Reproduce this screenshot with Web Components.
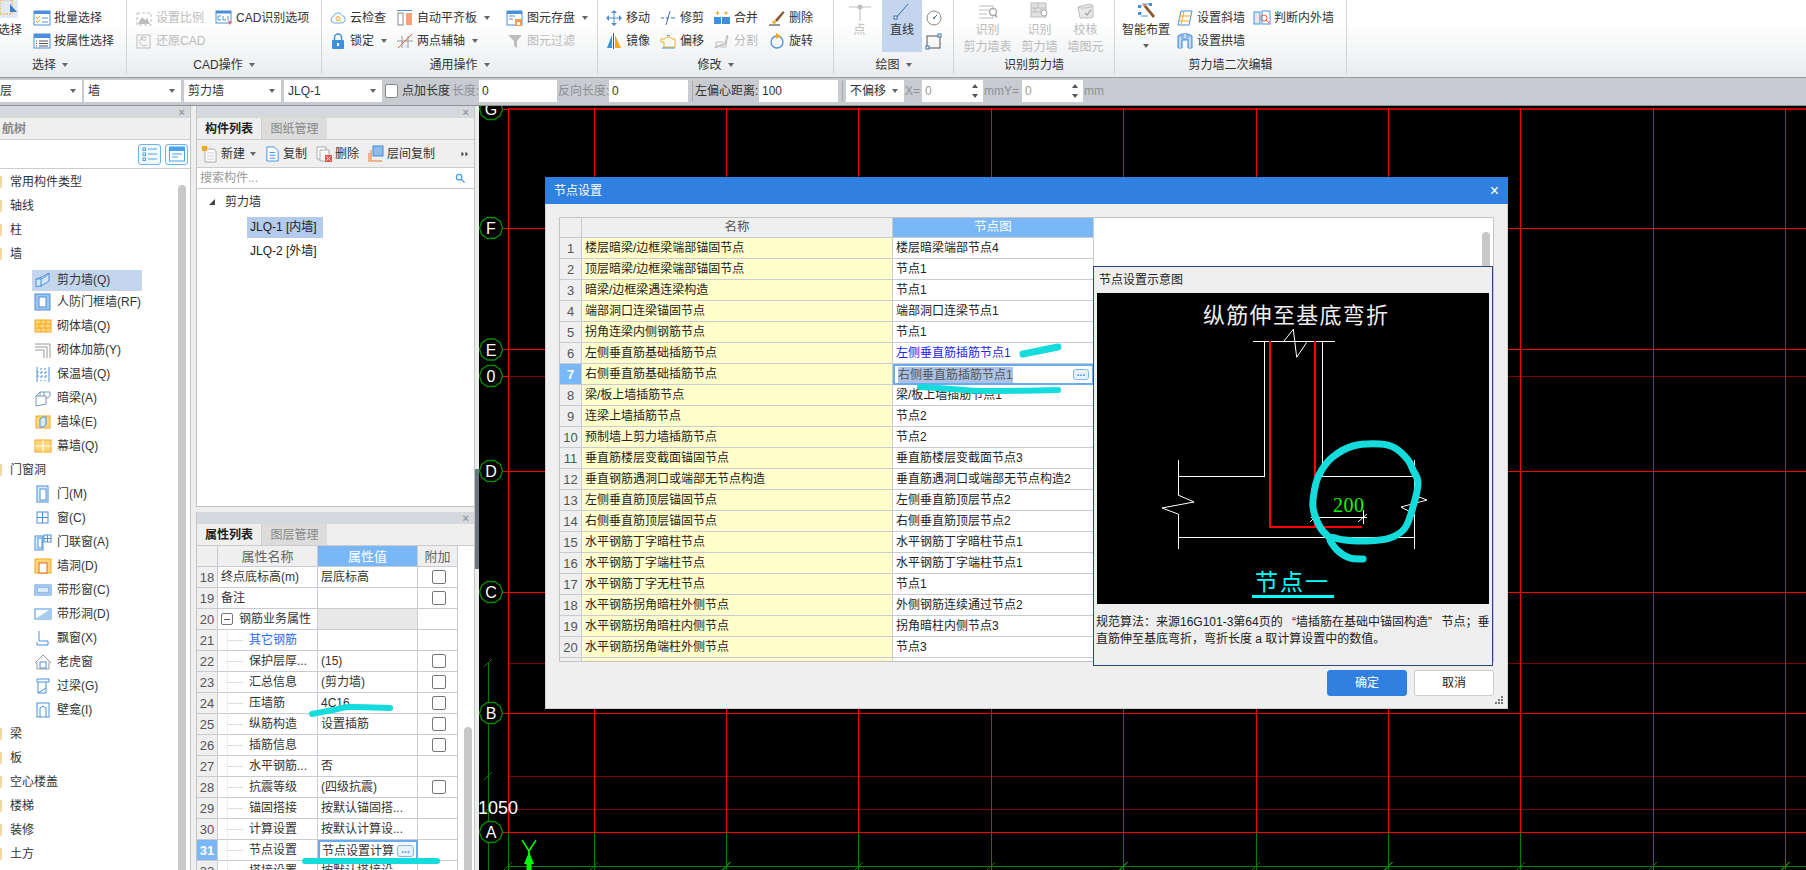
<!DOCTYPE html>
<html lang="zh">
<head>
<meta charset="utf-8">
<title>节点设置</title>
<style>
    html, body { margin: 0; height: 100%; overflow: hidden; }
    body { font: 12px/1 "Liberation Sans", "Noto Sans CJK SC", sans-serif; color: #333; }
</style>
</head>
<body>

<cad-app>
    <ribbon-bar slot="top">
        <ribbon-group label="选择" cols="34px 92px" style="width:127px;--label-pad:0 26px 0 0">
            <rb-big icon="select" style="margin-left:-3px;width:26px">选择</rb-big>
            <rb-item icon="batch">批量选择</rb-item>
            <rb-item icon="attrsel">按属性选择</rb-item>
        </ribbon-group>
        <ribbon-group label="CAD操作" cols="80px 100px" pad="9" style="width:195px">
            <rb-item icon="scale" dim>设置比例</rb-item>
            <rb-item icon="restore" dim>还原CAD</rb-item>
            <rb-item icon="cadopt">CAD识别选项</rb-item>
        </ribbon-group>
        <ribbon-group label="通用操作" cols="67px 110px 90px" pad="8" style="width:276px">
            <rb-item icon="cloud">云检查</rb-item>
            <rb-item icon="lock" arrow>锁定</rb-item>
            <rb-item icon="flush" arrow>自动平齐板</rb-item>
            <rb-item icon="twopt" arrow>两点辅轴</rb-item>
            <rb-item icon="store" arrow>图元存盘</rb-item>
            <rb-item icon="filter" dim>图元过滤</rb-item>
        </ribbon-group>
        <ribbon-group label="修改" cols="54px 54px 55px 50px" pad="8" style="width:236px">
            <rb-item icon="move">移动</rb-item>
            <rb-item icon="mirror">镜像</rb-item>
            <rb-item icon="trim">修剪</rb-item>
            <rb-item icon="offset">偏移</rb-item>
            <rb-item icon="merge">合并</rb-item>
            <rb-item icon="split" dim>分割</rb-item>
            <rb-item icon="brush">删除</rb-item>
            <rb-item icon="rotate">旋转</rb-item>
        </ribbon-group>
        <ribbon-group label="绘图" cols="48px 44px 20px" pad="0" style="width:120px;padding-left:0">
            <rb-big icon="point" dim style="margin-left:12px;width:27px">点</rb-big>
            <rb-big icon="line" on style="width:40px">直线</rb-big>
            <rb-item icon="circle"></rb-item>
            <rb-item icon="rect"></rb-item>
        </ribbon-group>
        <ribbon-group label="识别剪力墙" cols="57px 46px 46px" pad="10" style="width:161px">
            <rb-big icon="idtable" dim style="width:47px">识别<br>剪力墙表</rb-big>
            <rb-big icon="idwall" dim style="width:37px">识别<br>剪力墙</rb-big>
            <rb-big icon="check3d" dim style="width:37px">校核<br>墙图元</rb-big>
        </ribbon-group>
        <ribbon-group label="剪力墙二次编辑" cols="55px 77px 90px" pad="7" style="width:232px">
            <rb-big icon="smart" drop style="width:48px">智能布置</rb-big>
            <rb-item icon="slope">设置斜墙</rb-item>
            <rb-item icon="arch">设置拱墙</rb-item>
            <rb-item icon="inout" style="grid-row:1">判断内外墙</rb-item>
        </ribbon-group>
    </ribbon-bar>

    <param-bar slot="top">
        <pb-combo style="width:82px;padding-left:0">层</pb-combo>
        <pb-combo style="width:97px;margin-left:2px">墙</pb-combo>
        <pb-combo style="width:97px;margin-left:3px">剪力墙</pb-combo>
        <pb-combo style="width:98px;margin-left:3px">JLQ-1</pb-combo>
        <pb-check style="margin-left:3px"></pb-check>
        <pb-label style="margin-left:4px;width:48px">点加长度</pb-label>
        <pb-label mute style="margin-left:2px;width:26px">长度:</pb-label>
        <pb-input style="margin-left:1px;width:78px">0</pb-input>
        <pb-label mute style="margin-left:1px;width:50px">反向长度:</pb-label>
        <pb-input style="margin-left:1px;width:79px">0</pb-input>
        <pb-sep style="margin-left:4px"></pb-sep>
        <pb-label style="margin-left:2px;width:64px">左偏心距离:</pb-label>
        <pb-input style="width:79px">100</pb-input>
        <pb-sep style="margin-left:4px"></pb-sep>
        <pb-combo style="width:58px;margin-left:3px">不偏移</pb-combo>
        <pb-label mute style="margin-left:1px;width:16px">X=</pb-label>
        <pb-input spin mute style="margin-left:1px;width:61px">0</pb-input>
        <pb-label mute style="margin-left:1px;width:37px">mmY=</pb-label>
        <pb-input spin mute style="margin-left:1px;width:61px">0</pb-input>
        <pb-label mute style="margin-left:1px">mm</pb-label>
    </param-bar>

    <nav-tree slot="left"></nav-tree>
    <side-panels slot="side">
        <component-list></component-list>
        <prop-table></prop-table>
    </side-panels>
    <cad-canvas slot="main"></cad-canvas>

    <node-dialog slot="over"></node-dialog>
    <ink-marks slot="over"></ink-marks>
</cad-app>

<script>
const BLUE = '#4a90d9', ORG = '#f5a623', GREY = '#bdbdbd'

const ICONS = {
    select: `<rect x="-6" y="-4" width="22" height="20" fill="#dfe9f7"/><rect x="-2" y="-2" width="12" height="14" fill="none" stroke="${ORG}" stroke-dasharray="2 1"/><path d="M8 2l7 8h-7z" fill="#3c7fc4"/>`,
    batch: `<rect x="0" y="1" width="16" height="14" fill="#fff" stroke="${BLUE}"/><rect x="0" y="1" width="16" height="3" fill="${BLUE}"/><path d="M2 7l1.5 1.5L6 6M2 11l1.5 1.5L6 10" stroke="${ORG}" fill="none"/><path d="M8 8h6M8 12h6" stroke="${BLUE}"/>`,
    attrsel: `<rect x="0" y="1" width="16" height="14" fill="#fff" stroke="${BLUE}"/><rect x="0" y="1" width="16" height="4" fill="${BLUE}"/><path d="M5 8h9M5 10.5h9M5 13h9M2 8h1M2 10.5h1M2 13h1" stroke="#555"/>`,
    scale: `<path d="M1 3h14v12H1z" fill="none" stroke="${GREY}" stroke-dasharray="3 2"/><path d="M2 14l4-7 3 3 2-2 3 6z" fill="${GREY}"/>`,
    restore: `<rect x="1" y="2" width="13" height="13" fill="none" stroke="${GREY}"/><path d="M11 5A4.5 4.5 0 1 0 11 12M6 3v4h4" fill="none" stroke="${GREY}"/>`,
    cadopt: `<rect x="0" y="1" width="15" height="12" fill="#fff" stroke="${BLUE}"/><rect x="0" y="1" width="15" height="2.5" fill="${BLUE}"/><path d="M2 6h3M2 10h3M2 6v4M7 6v4h3M12 6v4" stroke="${BLUE}" fill="none"/><path d="M12 10l4 3-2 .5-.5 2z" fill="#e8632b"/>`,
    cloud: `<path d="M4 13a3.4 3.4 0 0 1-.5-6.6A4.5 4.5 0 0 1 12 5.5a3.8 3.8 0 0 1 0 7.5z" fill="#fff" stroke="#62aee8"/><circle cx="8" cy="8.5" r="2" fill="none" stroke="${ORG}"/><path d="M9.5 10l1.5 1.5" stroke="${ORG}"/>`,
    lock: `<rect x="2" y="7" width="12" height="9" rx="1" fill="#3f8fe0"/><path d="M4.5 7V4.5a3.5 3.5 0 0 1 7 0V7" fill="none" stroke="#3f8fe0" stroke-width="1.5"/><rect x="7" y="10" width="2" height="3" fill="#fff"/>`,
    flush: `<path d="M0 .5h15" stroke="${BLUE}"/><rect x="1" y="3" width="5" height="12" fill="#fff" stroke="#888"/><rect x="9" y="3" width="6" height="12" fill="#f9a077"/>`,
    twopt: `<path d="M0 8h16M5 3v12M11 3v12" stroke="#999"/><path d="M1 15L15 1" stroke="#e8632b"/>`,
    store: `<rect x="0" y="1" width="15" height="14" fill="#fff" stroke="${BLUE}"/><rect x="0" y="1" width="15" height="3" fill="${BLUE}"/><path d="M2 6h6M2 9h4" stroke="${BLUE}"/><rect x="8" y="9" width="7" height="7" fill="#f79a5a"/><rect x="10" y="12" width="3" height="3" fill="#fff"/>`,
    filter: `<path d="M1 2h14l-5 6v7l-3-2V8z" fill="${GREY}"/>`,
    move: `<path d="M8 1v14M1 8h14" stroke="${BLUE}"/><path d="M8 0l3 3H5zM8 16l3-3H5zM0 8l3-3v6zM16 8l-3-3v6z" fill="${BLUE}"/>`,
    trim: `<path d="M1 8h3M6 8h3M11 8h4" stroke="#3a6ea5"/><path d="M6 15L10 1" stroke="#3a6ea5"/>`,
    merge: `<rect x="0" y="7" width="7" height="7" fill="#3f8fe0"/><rect x="8" y="7" width="8" height="7" fill="#3f8fe0"/><path d="M3.5 1v4M1.5 3h4M12 1v4M10 3h4" stroke="${ORG}"/>`,
    brush: `<path d="M6 10l8-9 1.5 1.5L8 12z" fill="#8a5a30"/><path d="M4 11c2-1 3 0 3 2-1 1-3 1-4 0z" fill="${ORG}"/><path d="M0 15h11" stroke="#333"/>`,
    mirror: `<path d="M6 2v13H1z" fill="#3f8fe0"/><path d="M9 2v13h6z" fill="${ORG}"/><path d="M7.5 0v16" stroke="#555"/>`,
    offset: `<path d="M4 14V9H1V6h4a4 4 0 0 1 7 0h3v8z" fill="#fff" stroke="${ORG}"/><path d="M2 15h13" stroke="${BLUE}"/><path d="M7 3a2 2 0 0 1 3 0" stroke="${BLUE}" fill="none"/>`,
    split: `<path d="M1 14l10-4 2-8 1 1-2 8-11 4zM2 9h7M2 9v5M12 8v6H6" fill="none" stroke="${GREY}"/>`,
    rotate: `<circle cx="8" cy="9" r="6" fill="none" stroke="${BLUE}" stroke-width="1.3"/><path d="M7 0l5 3-5 3z" fill="${ORG}"/>`,
    point: `<path d="M-3 5h22M8 5v14" stroke="${GREY}"/><circle cx="8" cy="5" r="2.5" fill="${GREY}"/>`,
    line: `<path d="M2 16L14 2" stroke="#3a6ea5"/><rect x="0" y="14" width="3" height="3" fill="#fff" stroke="#3a6ea5"/>`,
    circle: `<rect x="7" y="-14" width="3" height="3" fill="#fff" stroke="#3a6ea5"/><circle cx="8" cy="8" r="7" fill="none" stroke="#888"/><path d="M8 8l3-3" stroke="#555"/><circle cx="8" cy="8" r="1" fill="#3a6ea5"/>`,
    rect: `<rect x="1" y="3" width="13" height="12" fill="none" stroke="#555"/><rect x="0" y="13" width="3" height="3" fill="#fff" stroke="#3a6ea5"/><rect x="12" y="1" width="3" height="3" fill="#fff" stroke="#3a6ea5"/>`,
    idtable: `<path d="M-1 4h14v12H-1M-1 8h10M-1 12h8" fill="none" stroke="${GREY}"/><circle cx="13" cy="10" r="3.5" fill="#fff" stroke="#aaa" stroke-width="1.5"/><path d="M15 13l2 2" stroke="#aaa" stroke-width="2"/>`,
    idwall: `<rect x="-1" y="1" width="15" height="14" fill="#e2e2e2" stroke="${GREY}"/><path d="M-1 6h15M-1 10h15M6 1v5M3 6v4M9 6v4" stroke="${GREY}"/><circle cx="12" cy="11" r="3" fill="#fff" stroke="#aaa"/>`,
    check3d: `<path d="M0 5l12-3 3 2v11l-3 1H2z" fill="#e8e8e8" stroke="${GREY}"/><path d="M0 5c4 2 10 1 15-1" fill="none" stroke="${GREY}"/><path d="M7 11l2 2 4-5" fill="none" stroke="#aaa" stroke-width="1.5"/>`,
    smart: `<path d="M1 4h3M1 11h3M4 2h7M3 14h7" stroke="${BLUE}"/><rect x="0" y="3" width="3" height="3" fill="${BLUE}"/><rect x="0" y="10" width="3" height="3" fill="${BLUE}"/><rect x="11" y="1" width="3" height="3" fill="${BLUE}"/><path d="M6 5l9 11 2-2-9-11z" fill="#8a5a30"/><path d="M5 3l1 2 2-1-1-2z" fill="#e8632b"/>`,
    slope: `<path d="M4 1h11l-3 14H1z" fill="#fff" stroke="${BLUE}"/><path d="M2 6h12M1.5 11h11M7 1l-3 14" stroke="${ORG}"/>`,
    arch: `<path d="M1 15V3c4-3 10-3 14 0v12h-4V7H5v8z" fill="#8fbbe8" stroke="${BLUE}"/><path d="M3 4v11M13 4v11M8 1v4" stroke="#fff"/>`,
    inout: `<rect x="0" y="2" width="6" height="12" fill="#dfe9f7" stroke="${BLUE}"/><rect x="8" y="1" width="8" height="13" fill="#fff" stroke="${BLUE}"/><circle cx="10" cy="8" r="3" fill="none" stroke="#e8632b"/><path d="M12 10l3 3" stroke="#e8632b"/>`,
    shear: `<path d="M1 7c4-1 8-3 13-6v8c-4 3-8 5-13 6z" fill="#d5e4f7" stroke="${BLUE}"/><path d="M1 7h5v8M6 7c3-1 6-3 8-6" fill="none" stroke="${BLUE}"/>`,
    rfdoor: `<rect x="0" y="0" width="15" height="16" fill="#9fc5ef" stroke="${BLUE}"/><rect x="4" y="3" width="7" height="10" fill="#fff" stroke="${BLUE}"/>`,
    brick: `<rect x="0" y="2" width="16" height="12" fill="#ffd77a" stroke="${ORG}"/><path d="M0 6h16M0 10h16M6 2v4M11 2v4M4 6v4M10 6v4M6 10v4M11 10v4" stroke="${ORG}" fill="none"/>`,
    rebar: `<path d="M0 2h15v14M0 5h12v11M0 8h9v8" fill="none" stroke="#9a9a9a"/>`,
    insul: `<path d="M2 1v15M14 1v15" stroke="${BLUE}"/><path d="M6 2v13M10 2v13M2 6h12M2 10h12" stroke="${BLUE}" stroke-dasharray="2 2"/>`,
    beam: `<path d="M1 6l4-4h10v4l-4 3v5l-10 2zM1 6h10v3M5 2v4M9 2v4" fill="#fff" stroke="#7b97b5"/>`,
    pier: `<rect x="1" y="2" width="14" height="12" fill="#ffd77a" stroke="${ORG}"/><path d="M5 5l3-2h3v8l-3 2H5z" fill="#dcebfa" stroke="${BLUE}"/>`,
    curtain: `<rect x="0" y="2" width="16" height="12" fill="#ffd77a" stroke="${ORG}"/><path d="M0 8h16M8 2v12" stroke="#fff"/>`,
    door: `<rect x="2" y="0" width="11" height="16" fill="#dcebfa" stroke="${BLUE}"/><rect x="5" y="3" width="6" height="11" fill="#fff" stroke="${BLUE}"/>`,
    win: `<rect x="2" y="2" width="11" height="11" fill="#fff" stroke="${BLUE}"/><path d="M7.5 2v11M2 7.5h11" stroke="${BLUE}"/>`,
    doorwin: `<rect x="0" y="2" width="8" height="14" fill="#dcebfa" stroke="${BLUE}"/><rect x="3" y="4" width="4" height="10" fill="#fff" stroke="${BLUE}"/><rect x="9" y="1" width="7" height="7" fill="#fff" stroke="${BLUE}"/><path d="M12.5 1v7M9 4.5h7" stroke="${BLUE}"/>`,
    hole: `<rect x="0" y="1" width="16" height="14" fill="#ffd77a" stroke="${ORG}"/><rect x="4" y="5" width="8" height="10" fill="#fff" stroke="#e8632b"/>`,
    stripw: `<rect x="0" y="3" width="16" height="10" fill="#fff" stroke="${BLUE}"/><rect x="2" y="5" width="12" height="6" fill="#dcebfa" stroke="${BLUE}"/>`,
    striph: `<rect x="0" y="3" width="16" height="10" fill="#fff" stroke="${BLUE}"/><path d="M0 13L16 3v10z" fill="#a9c9ee"/>`,
    bay: `<path d="M4 1v10h9v4H2v-3" fill="none" stroke="${BLUE}"/>`,
    dormer: `<path d="M8 1L0 9M8 1l8 8M2 8v7h12V8" fill="none" stroke="#999"/><rect x="5" y="8" width="6" height="6" fill="#fff" stroke="${BLUE}"/>`,
    lintel: `<path d="M2 1h12v3H2zM3 4v11h8V4M3 15l8-5" fill="#fff" stroke="${BLUE}"/>`,
    niche: `<rect x="2" y="1" width="12" height="14" fill="#fff" stroke="${BLUE}"/><path d="M5 15V6l3-2 3 2v9" fill="none" stroke="${BLUE}"/>`,
    list: `<path d="M6 3h9M6 8h9M6 13h9" stroke="#4aa3ef"/><rect x="1" y="2" width="2.5" height="2.5" fill="none" stroke="#4aa3ef"/><rect x="1" y="7" width="2.5" height="2.5" fill="none" stroke="#4aa3ef"/><rect x="1" y="12" width="2.5" height="2.5" fill="none" stroke="#4aa3ef"/>`,
    form: `<rect x=".5" y="1" width="15" height="14" fill="#fff" stroke="#4aa3ef"/><rect x=".5" y="1" width="15" height="4" fill="#4aa3ef"/><path d="M3 8h10M3 11h6" stroke="#4aa3ef"/>`,
    newdoc: `<path d="M3 3h9l2 2v11H3z" fill="#fff" stroke="#aaa"/><path d="M5 7h7M5 10h7M5 13h7" stroke="#ccc"/><rect x="0" y="0" width="5" height="5" fill="${ORG}"/>`,
    copy: `<path d="M2 1h8l4 4v11H2z" fill="#fff" stroke="#3f8fe0"/><path d="M5 7h6M5 10h6M5 13h6" stroke="#3f8fe0"/>`,
    deldoc: `<path d="M1 1h9v12H1z" fill="#fff" stroke="#aaa"/><path d="M4 4h9v11H4z" fill="#fff" stroke="#aaa"/><rect x="9" y="9" width="7" height="7" fill="#e2564a"/><path d="M10.5 10.5l4 4M14.5 10.5l-4 4" stroke="#fff"/>`,
    floor: `<rect x="5" y="0" width="10" height="10" fill="#8fbbe8" stroke="#3f8fe0"/><path d="M3 4v11h11M1 7v9" fill="none" stroke="#e8732b"/>`,
    search: `<circle cx="6" cy="6" r="4" fill="#fff" stroke="#4aa3ef" stroke-width="2"/><path d="M9 9l5 5" stroke="#4aa3ef" stroke-width="2"/>`,
    more: `<path d="M1 3l5 5-5 5zM9 3l5 5-5 5z" fill="#444"/>`
}

function ikon(navn, storrelse = 16) {
    return `<svg width="${storrelse}" height="${storrelse}" viewBox="0 0 16 16" style="display:block;overflow:visible;flex:none">${ICONS[navn] || ''}</svg>`
}

class CadApp extends HTMLElement {
    constructor() {
        super()
        this.attachShadow({ mode: 'open' }).innerHTML = `
            <style>
                :host { display: flex; flex-direction: column; position: relative; width: 100vw; height: 100vh; overflow: hidden; }
                .main { flex: 1; display: flex; min-height: 0; background: #eeeeee; }
                .split { width: 5px; display: flex; align-items: flex-start; box-sizing: border-box; border-left: 1px solid #c4c4c4; background: #ececec; }
                .split i { display: block; width: 100%; height: 100px; margin-top: 363px; background: #6a7783; }
                .main ::slotted([slot=main]) { flex: 1; }
                .main ::slotted([slot=left]) { margin-right: 5px; }
            </style>
            <slot name="top"></slot>
            <div class="main">
                <slot name="left"></slot>
                <slot name="side"></slot>
                <div class="split"><i></i></div>
                <slot name="main"></slot>
            </div>
            <slot name="over"></slot>
        `
    }
}
customElements.define('cad-app', CadApp)

class RibbonBar extends HTMLElement {
    constructor() {
        super()
        this.attachShadow({ mode: 'open' }).innerHTML = `
            <style>
                :host { display: flex; height: 78px; box-sizing: border-box; overflow: hidden; background: linear-gradient(#fff 30%, #e9ecee 100%); border-bottom: 1px solid #9a9a9a; }
            </style>
            <slot></slot>
        `
    }
}
customElements.define('ribbon-bar', RibbonBar)

class RibbonGroup extends HTMLElement {
    constructor() {
        super()
        const pad = this.getAttribute('pad') || 0
        this.attachShadow({ mode: 'open' }).innerHTML = `
            <style>
                :host { display: flex; flex: none; flex-direction: column; height: 74px; box-sizing: border-box; border-right: 1px solid #d2d4d6; }
                .body { height: 52px; box-sizing: border-box; padding: 6px 0 0 ${pad}px; display: grid; grid-auto-flow: column; grid-template-rows: 23px 23px; grid-template-columns: ${this.getAttribute('cols')}; }
                .label { flex: 1; display: flex; align-items: center; justify-content: center; gap: 6px; padding: var(--label-pad, 0); margin-top: 3px; }
                i { width: 0; height: 0; border: 3px solid transparent; border-top: 4px solid #666; border-bottom: 0; }
            </style>
            <div class="body"><slot></slot></div>
            <div class="label">${this.getAttribute('label')}${['识别剪力墙', '剪力墙二次编辑'].includes(this.getAttribute('label')) ? '' : '<i></i>'}</div>
        `
    }
}
customElements.define('ribbon-group', RibbonGroup)

class RbItem extends HTMLElement {
    constructor() {
        super()
        this.attachShadow({ mode: 'open' }).innerHTML = `
            <style>
                :host { display: flex; align-items: center; gap: 4px; height: 23px; white-space: nowrap; }
                :host([dim]) { color: #bbb; }
                i { width: 0; height: 0; margin-left: 3px; border: 3px solid transparent; border-top: 4px solid #666; border-bottom: 0; }
            </style>
            ${ikon(this.getAttribute('icon'))}<slot></slot>${this.hasAttribute('arrow') ? '<i></i>' : ''}
        `
    }
}
customElements.define('rb-item', RbItem)

class RbBig extends HTMLElement {
    constructor() {
        super()
        this.attachShadow({ mode: 'open' }).innerHTML = `
            <style>
                :host { display: flex; flex-direction: column; align-items: center; grid-row: 1 / span 2; height: 52px; margin-top: -6px; line-height: 17px; text-align: center; white-space: nowrap; }
                :host([dim]) { color: #bbb; }
                :host([on]) { background: #c4d5ee; }
                .ikon { height: 22px; display: flex; align-items: flex-end; justify-content: center; flex: none; padding-bottom: 4px; box-sizing: border-box; }
                i { width: 0; height: 0; margin-top: 5px; border: 3px solid transparent; border-top: 4px solid #666; border-bottom: 0; }
            </style>
            <div class="ikon">${ikon(this.getAttribute('icon'))}</div>
            <div><slot></slot></div>
            ${this.hasAttribute('drop') ? '<i></i>' : ''}
        `
    }
}
customElements.define('rb-big', RbBig)

class ParamBar extends HTMLElement {
    constructor() {
        super()
        this.attachShadow({ mode: 'open' }).innerHTML = `
            <style>
                :host { display: flex; align-items: center; height: 26px; padding-bottom: 1px; background: #c8cbd0; border-bottom: 1px solid #8e9094; white-space: nowrap; }
            </style>
            <slot></slot>
        `
    }
}
customElements.define('param-bar', ParamBar)

class PbCombo extends HTMLElement {
    constructor() {
        super()
        this.attachShadow({ mode: 'open' }).innerHTML = `
            <style>
                :host { display: flex; align-items: center; justify-content: space-between; flex: none; height: 22px; box-sizing: border-box; padding: 0 6px 0 4px; background: #fff; }
                i { width: 0; height: 0; border: 3px solid transparent; border-top: 4px solid #666; border-bottom: 0; }
            </style>
            <span><slot></slot></span><i></i>
        `
    }
}
customElements.define('pb-combo', PbCombo)

class PbInput extends HTMLElement {
    constructor() {
        super()
        this.attachShadow({ mode: 'open' }).innerHTML = `
            <style>
                :host { display: flex; align-items: center; justify-content: space-between; flex: none; height: 22px; box-sizing: border-box; padding: 0 5px 0 3px; background: #fff; }
                :host([mute]) { color: #999; }
                .spin { display: flex; flex-direction: column; gap: 6px; }
                i { display: block; width: 0; height: 0; border: 3px solid transparent; border-top: 0; border-bottom: 4px solid #555; }
                i + i { border-top: 4px solid #555; border-bottom: 0; }
            </style>
            <span><slot></slot></span>
            ${this.hasAttribute('spin') ? '<div class="spin"><i></i><i></i></div>' : ''}
        `
    }
}
customElements.define('pb-input', PbInput)

class PbLabel extends HTMLElement {
    constructor() {
        super()
        this.attachShadow({ mode: 'open' }).innerHTML = `
            <style>
                :host { display: block; flex: none; }
                :host([mute]) { color: #8f9195; }
            </style>
            <slot></slot>
        `
    }
}
customElements.define('pb-label', PbLabel)

class PbCheck extends HTMLElement {
    constructor() {
        super()
        this.attachShadow({ mode: 'open' }).innerHTML = `
            <style>:host { display: block; flex: none; width: 13px; height: 14px; box-sizing: border-box; background: #fff; border: 1px solid #888; border-radius: 2px; }</style>
        `
    }
}
customElements.define('pb-check', PbCheck)

class PbSep extends HTMLElement {
    constructor() {
        super()
        this.attachShadow({ mode: 'open' }).innerHTML = `
            <style>:host { display: block; flex: none; width: 1px; height: 20px; background: #a6a8ac; }</style>
        `
    }
}
customElements.define('pb-sep', PbSep)

class PanelHead extends HTMLElement {
    constructor() {
        super()
        const faner = (this.getAttribute('tabs') || '').split(',').filter(Boolean)
        this.attachShadow({ mode: 'open' }).innerHTML = `
            <style>
                :host { display: block; flex: none; }
                .tittel { height: 12px; display: flex; align-items: center; justify-content: flex-end; padding-right: 5px; background: #d5d8dc; color: #999; font-size: 11px; font-weight: bold; }
                .faner { height: 22px; display: flex; background: #efefef; border-bottom: 1px solid #ccc; box-sizing: border-box; }
                .fane { width: 65px; display: flex; align-items: center; justify-content: center; color: #888; background: #dcdcdc; border-left: 1px solid #d0d0d0; }
                .fane.aktiv { color: #222; font-weight: bold; background: #efefef; border: 0; width: 64px; }
            </style>
            <div class="tittel">×</div>
            ${faner.length ? `<div class="faner">${faner.map((f, i) => `<div class="fane ${i ? '' : 'aktiv'}">${f}</div>`).join('')}</div>` : ''}
        `
    }
}
customElements.define('panel-head', PanelHead)

class NavTree extends HTMLElement {
    constructor() {
        super()
        const rader = [
            ['常用构件类型'], ['轴线'], ['柱'], ['墙'],
            ['剪力墙(Q)', 'shear', 1], ['人防门框墙(RF)', 'rfdoor'], ['砌体墙(Q)', 'brick'], ['砌体加筋(Y)', 'rebar'],
            ['保温墙(Q)', 'insul'], ['暗梁(A)', 'beam'], ['墙垛(E)', 'pier'], ['幕墙(Q)', 'curtain'],
            ['门窗洞'],
            ['门(M)', 'door'], ['窗(C)', 'win'], ['门联窗(A)', 'doorwin'], ['墙洞(D)', 'hole'], ['带形窗(C)', 'stripw'],
            ['带形洞(D)', 'striph'], ['飘窗(X)', 'bay'], ['老虎窗', 'dormer'], ['过梁(G)', 'lintel'], ['壁龛(I)', 'niche'],
            ['梁'], ['板'], ['空心楼盖'], ['楼梯'], ['装修'], ['土方']
        ]
        this.attachShadow({ mode: 'open' }).innerHTML = `
            <style>
                :host { display: flex; flex-direction: column; width: 191px; flex: none; background: #fff; border-right: 1px solid #c4c4c4; box-sizing: border-box; overflow: hidden; }
                .hode { height: 21px; display: flex; align-items: center; padding-left: 2px; background: #efefef; color: #888; border-bottom: 1px solid #ccc; font-weight: bold; }
                .knapper { height: 28px; display: flex; justify-content: flex-end; align-items: center; gap: 4px; padding-right: 2px; border-bottom: 1px solid #ccc; background: #fff; position: relative; }
                .knapper b { width: 23px; height: 21px; display: flex; align-items: center; justify-content: center; box-sizing: border-box; border: 1px solid #6eb3f0; border-radius: 3px; background: #f4f9fe; }
                .kropp { flex: 1; position: relative; padding-top: 1px; }
                .rad { height: 24px; display: flex; align-items: center; }
                .kat { padding-left: 10px; position: relative; }
                .kat::before { content: ""; position: absolute; left: 0; top: 6px; width: 2px; height: 12px; background: #f3d9a0; }
                .barn { padding-left: 35px; gap: 6px; }
                .barn span { padding: 4px 0; }
                .barn.valgt { background: #c4d5ee; width: 110px; margin-left: 32px; padding-left: 3px; padding-bottom: 2px; box-sizing: border-box; height: 21px; margin-top: 4px; margin-bottom: -1px; }
                .rull { position: absolute; right: 4px; top: 16px; bottom: 0; width: 8px; background: #c8c8c8; border-radius: 4px 4px 0 0; }
            </style>
            <panel-head></panel-head>
            <div class="hode">航树</div>
            <div class="knapper"><b>${ikon('list')}</b><b>${ikon('form')}</b></div>
            <div class="kropp">
                ${rader.map(([tekst, ik, valgt]) => ik
                    ? `<div class="rad barn ${valgt ? 'valgt' : ''}">${ikon(ik)}<span>${tekst}</span></div>`
                    : `<div class="rad kat">${tekst}</div>`).join('')}
                <div class="rull"></div>
            </div>
        `
    }
}
customElements.define('nav-tree', NavTree)

class SidePanels extends HTMLElement {
    constructor() {
        super()
        this.attachShadow({ mode: 'open' }).innerHTML = `
            <style>
                :host { display: flex; flex-direction: column; gap: 5px; width: 278px; flex: none; overflow: hidden; }
            </style>
            <slot></slot>
        `
    }
}
customElements.define('side-panels', SidePanels)

class ComponentList extends HTMLElement {
    constructor() {
        super()
        this.attachShadow({ mode: 'open' }).innerHTML = `
            <style>
                :host { display: flex; flex-direction: column; height: 401px; flex: none; background: #fff; border-left: 1px solid #c4c4c4; box-sizing: border-box; border-bottom: 1px solid #c4c4c4; }
                .verktoy { height: 28px; display: flex; align-items: center; background: #efefef; border-bottom: 1px solid #ccc; box-sizing: border-box; padding-left: 5px; color: #333; }
                .verktoy span { display: flex; align-items: center; gap: 3px; margin-left: 9px; }
                .verktoy span:first-child { margin-left: 0; }
                .verktoy i { width: 0; height: 0; margin-left: 2px; border: 3px solid transparent; border-top: 4px solid #666; border-bottom: 0; }
                .verktoy .mer { margin-left: auto; padding-right: 5px; }
                .sok { height: 20px; display: flex; align-items: center; justify-content: space-between; padding: 0 8px 0 3px; color: #999; border-bottom: 1px solid #c8c8c8; }
                .tre { padding-top: 1px; }
                .rad { height: 24px; display: flex; align-items: center; }
                .topp { padding-left: 12px; gap: 10px; }
                .topp i { width: 0; height: 0; border-style: solid; border-width: 0 0 6px 6px; border-color: transparent transparent #444 transparent; }
                .barn { margin-left: 50px; padding: 0 0 2px 3px; width: 76px; box-sizing: border-box; height: 21px; white-space: nowrap; margin-bottom: 2px; margin-top: 3px; color: #222; }
                .valgt { background: #b4cbec; }
            </style>
            <panel-head tabs="构件列表,图纸管理"></panel-head>
            <div class="verktoy">
                <span>${ikon('newdoc')}新建<i></i></span>
                <span>${ikon('copy', 15)}复制</span>
                <span>${ikon('deldoc')}删除</span>
                <span>${ikon('floor')}层间复制</span>
                <span class="mer">${ikon('more', 8)}</span>
            </div>
            <div class="sok"><span>搜索构件...</span>${ikon('search', 11)}</div>
            <div class="tre">
                <div class="rad topp"><i></i>剪力墙</div>
                <div class="rad barn valgt">JLQ-1 [内墙]</div>
                <div class="rad barn">JLQ-2 [外墙]</div>
            </div>
        `
    }
}
customElements.define('component-list', ComponentList)

class PropTable extends HTMLElement {
    constructor() {
        super()
        const rader = [
            [18, '终点底标高(m)', '层底标高', 1, 0], [19, '备注', '', 1, 0],
            [20, '钢筋业务属性', '', 0, 2], [21, '其它钢筋', '', 0, 3],
            [22, '保护层厚...', '(15)', 1, 1], [23, '汇总信息', '(剪力墙)', 1, 1], [24, '压墙筋', '4C16', 1, 1],
            [25, '纵筋构造', '设置插筋', 1, 1], [26, '插筋信息', '', 1, 1], [27, '水平钢筋...', '否', 0, 1],
            [28, '抗震等级', '(四级抗震)', 1, 1], [29, '锚固搭接', '按默认锚固搭...', 0, 1], [30, '计算设置', '按默认计算设...', 0, 1],
            [31, '节点设置', '节点设置计算', 0, 4], [32, '搭接设置', '按默认搭接设...', 0, 1]
        ]
        this.attachShadow({ mode: 'open' }).innerHTML = `
            <style>
                :host { display: flex; flex-direction: column; flex: 1; min-height: 0; background: #fff; border-left: 1px solid #c4c4c4; overflow: hidden; position: relative; }
                .gitter { display: grid; grid-template-columns: 21px 100px 100px 40px; grid-auto-rows: 21px; width: 261px; }
                .gitter > div { display: flex; align-items: center; box-sizing: border-box; border-right: 1px solid #c8ccd2; border-bottom: 1px solid #c8ccd2; padding-left: 3px; white-space: nowrap; position: relative; }
                .nr { background: #efefef; justify-content: center; padding: 0 !important; font-size: 13px; color: #555; }
                .h { background: #efefef; justify-content: center; color: #666; font-size: 13px; padding: 0 !important; }
                .h.blaa { background: #7ab7f7; color: #fff; }
                .nr.sel { background: #7ab7f7; color: #fff; font-weight: bold; }
                .blaatekst { color: #2b6cf0; }
                .trad { padding-left: 31px !important; }
                .trad::before { content: ""; position: absolute; left: 9px; top: 10px; width: 16px; border-top: 1px solid #ddd; }
                .trad::after { content: ""; position: absolute; left: 9px; top: 0; height: 21px; border-left: 1px dotted #ddd; }
                .gruppe { gap: 6px; }
                .minus { width: 12px; height: 12px; box-sizing: border-box; border: 1px solid #777; border-radius: 2px; display: flex; align-items: center; justify-content: center; }
                .minus::before { content: ""; width: 6px; border-top: 1px solid #555; }
                .graa { background: #e8e8e8; }
                .cb { width: 14px; height: 14px; box-sizing: border-box; background: #fff; border: 1px solid #777; border-radius: 2px; margin: auto; }
                .felt { border: 2px solid #6aabf0 !important; padding-left: 2px !important; justify-content: space-between; padding-right: 2px; background: #fff; }
                .prikk { width: 17px; height: 12px; box-sizing: border-box; border: 1px solid #7ab7f7; border-radius: 3px; background: #eaf3fd; color: #3f8fe0; font-size: 10px; line-height: 7px; text-align: center; font-weight: bold; }
                .rull { position: absolute; left: 267px; top: 215px; bottom: 0; width: 8px; background: #c8c8c8; border-radius: 4px 4px 0 0; }
            </style>
            <panel-head tabs="属性列表,图层管理"></panel-head>
            <div class="gitter">
                <div class="nr"></div><div class="h">属性名称</div><div class="h blaa">属性值</div><div class="h">附加</div>
                ${rader.map(([nr, navn, verdi, cb, type]) => `
                    <div class="nr ${type === 4 ? 'sel' : ''}">${nr}</div>
                    ${type === 2 ? `<div class="gruppe"><span class="minus"></span>${navn}</div>`
                        : `<div class="${type ? 'trad' : ''} ${type === 3 ? 'blaatekst' : ''}">${navn}</div>`}
                    ${type === 4 ? `<div class="felt">${verdi}<span class="prikk">...</span></div>`
                        : `<div class="${type === 2 ? 'graa' : ''}">${verdi}</div>`}
                    <div>${cb ? '<span class="cb"></span>' : ''}</div>
                `).join('')}
            </div>
            <div class="rull"></div>
        `
    }
}
customElements.define('prop-table', PropTable)

class CadCanvas extends HTMLElement {
    constructor() {
        super()
        const kolonner = [508, 594, 726.4, 858.8, 991.2, 1123.6, 1256, 1388.4, 1520.8, 1653.2, 1785.6]
        const rad = [[107.5, '#c00000', 2], [227, '#ff0000', 1], [348.5, '#ff0000', 1], [375, '#800000', 1], [470, '#ff0000', 1], [591, '#ff0000', 1], [662.5, '#800000', 1], [712, '#ff0000', 1], [775.5, '#800000', 1], [808, '#800000', 1], [831, '#ff0000', 1]]
        const bobler = [['G', 108], ['F', 227], ['E', 348.5], ['0', 375], ['D', 470], ['C', 591], ['B', 712], ['A', 831]]
        const mangekant = (cx, cy) => Array.from({ length: 10 }, (_, i) => {
            const v = i * Math.PI / 5
            return `${(cx + 11.5 * Math.cos(v)).toFixed(1)},${(cy + 11 * Math.sin(v)).toFixed(1)}`
        }).join(' ')
        this.attachShadow({ mode: 'open' }).innerHTML = `
            <style>
                :host { display: block; background: #000; overflow: hidden; min-width: 0; }
                svg { display: block; width: 100%; height: 100%; }
                text { font-family: "Liberation Sans", sans-serif; fill: #fff; }
            </style>
            <svg viewBox="479 105 1327 765" preserveAspectRatio="xMinYMin slice" shape-rendering="crispEdges">
                ${rad.map(([y, c, w]) => `<path d="M508 ${y}H1806" stroke="${c}" stroke-width="${w}"/>`).join('')}
                ${kolonner.map(x => `<path d="M${x} 107V831" stroke="#ff0000"/><path d="M${x} 831V870" stroke="#008000"/><path d="M${x - 4} 869l8-8" stroke="#008000"/>`).join('')}
                <path d="M508 865H1806M488 662V870M484 666l8-8M484 779l8-8M484 812l8-8M484 835l8-8" stroke="#008000" fill="none"/>
                ${bobler.map(([t, y]) => `
                    <path d="M502 ${y}H508" stroke="#ff0000"/>
                    <polygon points="${mangekant(491, y)}" fill="#000" stroke="#0a8a0a" stroke-width="1.3" shape-rendering="auto"/>
                    <text x="491" y="${y + 6}" text-anchor="middle" font-size="16" shape-rendering="auto">${t}</text>`).join('')}
                <text x="478" y="813" font-size="18" shape-rendering="auto">1050</text>
                <path d="M522 839l7 11 7-11M529 850v5" stroke="#00ff00" fill="none" stroke-width="1.5" shape-rendering="auto"/>
                <path d="M529 851l5 12h-2.500v7h-5v-7H524z" fill="#00ff00" shape-rendering="auto"/>
            </svg>
        `
    }
}
customElements.define('cad-canvas', CadCanvas)

class NodeDialog extends HTMLElement {
    constructor() {
        super()
        const rader = [
            ['楼层暗梁/边框梁端部锚固节点', '楼层暗梁端部节点4'], ['顶层暗梁/边框梁端部锚固节点', '节点1'], ['暗梁/边框梁遇连梁构造', '节点1'],
            ['端部洞口连梁锚固节点', '端部洞口连梁节点1'], ['拐角连梁内侧钢筋节点', '节点1'], ['左侧垂直筋基础插筋节点', '左侧垂直筋插筋节点1'],
            ['右侧垂直筋基础插筋节点', '右侧垂直筋插筋节点1'], ['梁/板上墙插筋节点', '梁/板上墙插筋节点1'], ['连梁上墙插筋节点', '节点2'],
            ['预制墙上剪力墙插筋节点', '节点2'], ['垂直筋楼层变截面锚固节点', '垂直筋楼层变截面节点3'], ['垂直钢筋遇洞口或端部无节点构造', '垂直筋遇洞口或端部无节点构造2'],
            ['左侧垂直筋顶层锚固节点', '左侧垂直筋顶层节点2'], ['右侧垂直筋顶层锚固节点', '右侧垂直筋顶层节点2'], ['水平钢筋丁字暗柱节点', '水平钢筋丁字暗柱节点1'],
            ['水平钢筋丁字端柱节点', '水平钢筋丁字端柱节点1'], ['水平钢筋丁字无柱节点', '节点1'], ['水平钢筋拐角暗柱外侧节点', '外侧钢筋连续通过节点2'],
            ['水平钢筋拐角暗柱内侧节点', '拐角暗柱内侧节点3'], ['水平钢筋拐角端柱外侧节点', '节点3'], ['', '']
        ]
        this.attachShadow({ mode: 'open' }).innerHTML = `
            <style>
                :host { display: flex; flex-direction: column; position: absolute; left: 545px; top: 177px; width: 963px; height: 532px; background: #efefef; box-sizing: border-box; border: 1px solid #d0d0d0; border-top: 0; }
                .tittel { height: 27px; flex: none; display: flex; align-items: center; justify-content: space-between; padding: 0 9px; margin: 0 -1px; background: #2f80e0; color: #fff; font-size: 12px; }
                .tittel b { font-size: 16px; font-weight: normal; }
                .ramme { margin: 13px 13px 0 13px; height: 445px; flex: none; box-sizing: border-box; border: 1px solid #c4c4c4; background: #fff; overflow: hidden; position: relative; }
                .gitter { display: grid; grid-template-columns: 22px 311px 201px; grid-template-rows: 20px; grid-auto-rows: 21px; width: 534px; }
                .gitter div { display: flex; align-items: center; box-sizing: border-box; border-right: 1px solid #c8ccd2; border-bottom: 1px solid #c8ccd2; padding-left: 3px; white-space: nowrap; background: #fff; color: #222; }
                .gitter .nr { background: #efefef; justify-content: center; padding: 0; font-size: 13px; color: #555; }
                .gitter .navn { background: #ffffcc; }
                .gitter .h { background: #efefef; justify-content: center; color: #555; padding: 0; font-size: 12.500px; }
                .gitter .h.blaa { background: #7ab7f7; color: #fff; }
                .gitter .nr.sel { background: #7ab7f7; color: #fff; font-weight: bold; }
                .gitter .lenke { color: #2222ee; }
                .gitter .felt { border: 2px solid #6aabf0; padding: 0 2px 0 3px; justify-content: space-between; }
                .felt span { background: #a9c2e6; color: #555; padding: 2px 0; }
                .felt .prikk { width: 16px; height: 11px; padding: 0; box-sizing: border-box; border: 1px solid #7ab7f7; border-radius: 3px; background: #eaf3fd; color: #3f8fe0; font-size: 10px; line-height: 5px; text-align: center; font-weight: bold; margin-right: 1px; }
                .rull { position: absolute; left: 922px; top: 14px; bottom: 0; width: 8px; background: #c8c8c8; border-radius: 4px 4px 0 0; }
                .knapper { display: flex; justify-content: flex-end; gap: 7px; padding: 8px 13px 0 0; }
                .knapper b { width: 80px; height: 26px; display: flex; align-items: center; justify-content: center; box-sizing: border-box; border-radius: 3px; background: #fff; border: 1px solid #ccc; font-weight: normal; color: #222; }
                .knapper b.hoved { background: #2f80e0; border-color: #2f80e0; color: #fff; }
                .grep { position: absolute; right: 3px; bottom: 3px; }
            </style>
            <div class="tittel"><span>节点设置</span><b>×</b></div>
            <div class="ramme">
                <div class="gitter">
                    <div class="nr"></div><div class="h">名称</div><div class="h blaa">节点图</div>
                    ${rader.map(([navn, verdi], i) => {
                        const n = i + 1
                        let celle = `<div>${verdi}</div>`
                        if (n === 6) celle = `<div class="lenke">${verdi}</div>`
                        if (n === 7) celle = `<div class="felt"><span>${verdi}</span><span class="prikk">...</span></div>`
                        return `<div class="nr ${n === 7 ? 'sel' : ''}">${navn ? n : ''}</div><div class="navn">${navn}</div>${celle}`
                    }).join('')}
                </div>
                <div class="rull"></div>
            </div>
            <div class="knapper"><b class="hoved">确定</b><b>取消</b></div>
            <svg class="grep" width="9" height="9" viewBox="0 0 9 9"><path d="M6 0h2v2H6zM3 3h2v2H3zM6 3h2v2H6zM0 6h2v2H0zM3 6h2v2H3zM6 6h2v2H6z" fill="#777"/></svg>
            <node-preview></node-preview>
        `
    }
}
customElements.define('node-dialog', NodeDialog)

class NodePreview extends HTMLElement {
    constructor() {
        super()
        this.attachShadow({ mode: 'open' }).innerHTML = `
            <style>
                :host { display: flex; flex-direction: column; position: absolute; left: 547px; top: 89px; width: 400px; height: 400px; box-sizing: border-box; background: #eeeeee; border: 1px solid #2a4a7e; padding: 0 3px; }
                .tittel { height: 26px; flex: none; display: flex; align-items: center; padding-left: 2px; color: #222; }
                svg { display: block; flex: none; width: 392px; height: 311px; background: #000; }
                .besk { padding-top: 10px; line-height: 17px; color: #222; white-space: nowrap; margin-left: -1px; }
                .besk span { word-spacing: 6px; }
                text { font-family: "Noto Sans CJK SC", sans-serif; }
            </style>
            <div class="tittel">节点设置示意图</div>
            <svg viewBox="1097 293 392 311" fill="none">
                <text x="1203" y="323" font-size="22" letter-spacing="1.300" fill="#eee" stroke="none">纵筋伸至基底弯折</text>
                <g stroke="#fff" shape-rendering="crispEdges">
                    <path d="M1253 341.500H1335M1264.500 341V476H1178M1322.500 341V476H1414M1178 460V495M1178 514V549M1414 460V495M1414 514V549M1178 537.500H1414M1311 517.500H1367M1363 510V524"/>
                </g>
                <path stroke="#fff" d="M1284 341L1293.300 329.300L1296.700 357.300L1306.700 342.300M1178 495L1194 502L1162 508L1178 514M1414 495L1427 500L1401 507L1414 514M1310 522L1317 515M1358 522L1367 514"/>
                <path stroke="#f00" stroke-width="2" d="M1270 341V527H1362M1315 341V527"/>
                <text x="1333" y="512" font-size="20" letter-spacing=".5" fill="#00ff00" stroke="none" style="font-family:'Liberation Serif',serif">200</text>
                <text x="1255" y="590" font-size="23" letter-spacing="2" fill="#00ffff" stroke="none">节点一</text>
                <path stroke="#00ffff" stroke-width="3" d="M1252 596.500H1334"/>
            </svg>
            <div class="besk"><span>规范算法：来源16G101-3第64页的 “墙插筋在基础中锚固构造” 节点；垂</span><br>直筋伸至基底弯折，弯折长度 a 取计算设置中的数值。</div>
        `
    }
}
customElements.define('node-preview', NodePreview)

// glatter en haandtegnet strek (Catmull-Rom til bezier)
function glatt(p) {
    let d = `M${p[0][0]} ${p[0][1]}`
    for (let i = 0; i < p.length - 1; i++) {
        const a = p[i - 1] || p[i], b = p[i], c = p[i + 1], e = p[i + 2] || c
        d += `C${(b[0] + (c[0] - a[0]) / 6).toFixed(1)} ${(b[1] + (c[1] - a[1]) / 6).toFixed(1)} ${(c[0] - (e[0] - b[0]) / 6).toFixed(1)} ${(c[1] - (e[1] - b[1]) / 6).toFixed(1)} ${c[0]} ${c[1]}`
    }
    return d
}

class InkMarks extends HTMLElement {
    constructor() {
        super()
        const ring = [[1363, 559], [1350, 558], [1337, 550], [1330, 538], [1345, 540], [1367, 541], [1390, 538], [1405, 528], [1413, 507], [1418, 483], [1413, 470], [1408, 460], [1395, 448], [1380, 444], [1353, 446], [1333, 456.7], [1321.7, 470], [1316, 483], [1313, 507], [1320, 527], [1330, 538]]
        this.attachShadow({ mode: 'open' }).innerHTML = `
            <style>
                :host { position: absolute; left: 0; top: 0; width: 1806px; height: 870px; pointer-events: none; }
                svg { display: block; }
            </style>
            <svg width="1806" height="870" fill="none" stroke="#15dcdc" stroke-linecap="round" stroke-linejoin="round">
                <path stroke-width="7" d="${glatt(ring)}"/>
                <path stroke-width="7" d="${glatt([[1023, 354], [1038, 351], [1058, 347]])}"/>
                <path stroke-width="6" d="${glatt([[920, 387], [951, 389], [986, 391], [1058, 390]])}"/>
                <path stroke-width="6" d="${glatt([[312, 714], [333, 710], [350, 707], [390, 708]])}"/>
                <path stroke-width="6" d="M305 861L350 861L437 861"/>
            </svg>
        `
    }
}
customElements.define('ink-marks', InkMarks)
</script>
</body>
</html>
